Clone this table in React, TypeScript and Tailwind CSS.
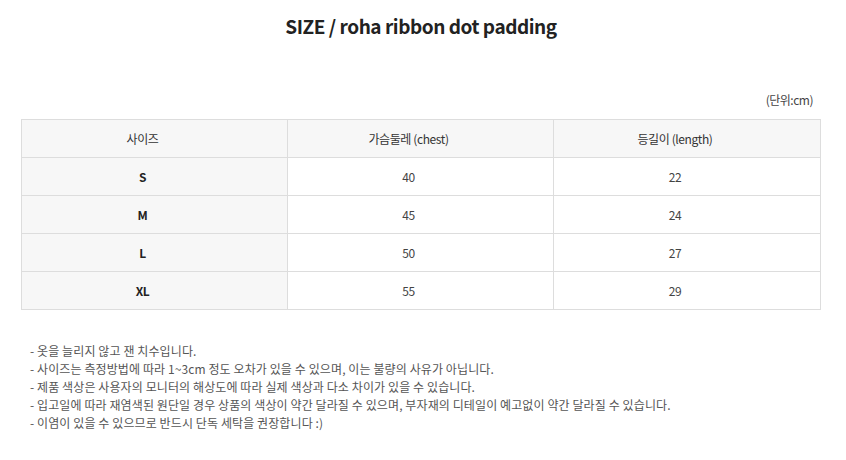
import React from "react";

const rows = [
  ["S", "40", "22"],
  ["M", "45", "24"],
  ["L", "50", "27"],
  ["XL", "55", "29"],
];

const notes = [
  "- 옷을 늘리지 않고 잰 치수입니다.",
  "- 사이즈는 측정방법에 따라 1~3cm 정도 오차가 있을 수 있으며, 이는 불량의 사유가 아닙니다.",
  "- 제품 색상은 사용자의 모니터의 해상도에 따라 실제 색상과 다소 차이가 있을 수 있습니다.",
  "- 입고일에 따라 재염색된 원단일 경우 상품의 색상이 약간 달라질 수 있으며, 부자재의 디테일이 예고없이 약간 달라질 수 있습니다.",
  "- 이염이 있을 수 있으므로 반드시 단독 세탁을 권장합니다 :)",
];

export default function App() {
  return (
    <div
      className="w-[846px] h-[460px] bg-white text-[#333]"
      style={{ fontFamily: '"Noto Sans CJK KR", "Noto Sans", sans-serif' }}
    >
      <div className="pl-[21px] w-[821px]">
        <h1 className="pt-[12px] h-[90px] text-center text-[19px] font-bold leading-[28px] text-[#222] tracking-[-0.45px]">
          SIZE / roha ribbon dot padding
        </h1>
        <div className="text-right pr-[8px] text-[12px] leading-[16px] tracking-[-0.5px] text-[#444] h-[29px] pt-[2px]">
          (단위:cm)
        </div>
        <div className="grid grid-cols-[266px_266px_1fr] border-t border-l border-[#dddddd] text-[12px] tracking-[-0.4px]">
          <div className="h-[38px] flex items-center justify-center pr-[24px] bg-[#f7f7f7] border-r border-b border-[#dddddd] text-[#333]">
            사이즈
          </div>
          <div className="h-[38px] flex items-center justify-center pr-[24px] bg-[#f7f7f7] border-r border-b border-[#dddddd] text-[#333]">
            가슴둘레 (chest)
          </div>
          <div className="h-[38px] flex items-center justify-center pr-[24px] bg-[#f7f7f7] border-r border-b border-[#dddddd] text-[#333]">
            등길이 (length)
          </div>
          {rows.map((r) => (
            <React.Fragment key={r[0]}>
              <div className="h-[38px] flex items-center justify-center pr-[24px] bg-[#f7f7f7] border-r border-b border-[#dddddd] font-bold text-[#222]">
                {r[0]}
              </div>
              <div className="h-[38px] flex items-center justify-center pr-[24px] border-r border-b border-[#dddddd] text-[#444]">
                {r[1]}
              </div>
              <div className="h-[38px] flex items-center justify-center pr-[24px] border-r border-b border-[#dddddd] text-[#444]">
                {r[2]}
              </div>
            </React.Fragment>
          ))}
        </div>
        <div className="pt-[32px] pl-[9px] text-[12px] leading-[18px] text-[#555] tracking-[0.1px]">
          {notes.map((n) => (
            <div key={n}>{n}</div>
          ))}
        </div>
      </div>
    </div>
  );
}
